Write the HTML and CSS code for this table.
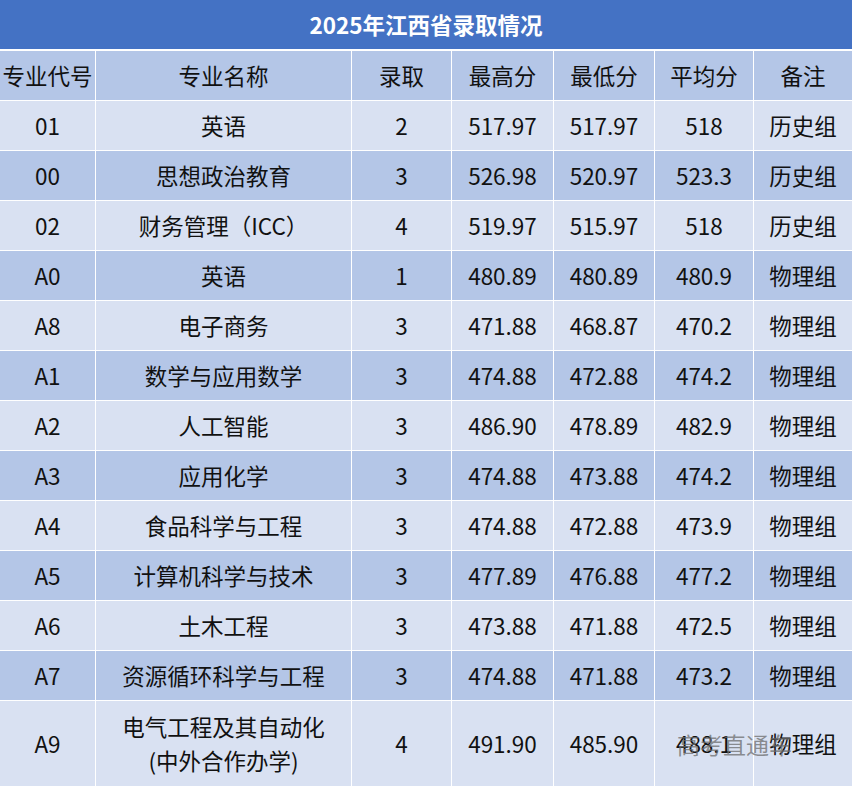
FILE: index.html
```html
<!DOCTYPE html>
<html lang="zh-CN">
<head>
<meta charset="utf-8">
<title>2025年江西省录取情况</title>
<link rel="stylesheet" href="styles.css">
</head>
<body>
<div class="wrap">
<table class="admit">
  <colgroup>
    <col class="c1"><col class="c2"><col class="c3"><col class="c4"><col class="c5"><col class="c6"><col class="c7">
  </colgroup>
  <thead>
    <tr class="title"><th colspan="7">2025年江西省录取情况</th></tr>
    <tr class="head">
      <th>专业代号</th><th>专业名称</th><th>录取</th><th>最高分</th><th>最低分</th><th>平均分</th><th>备注</th>
    </tr>
  </thead>
  <tbody>
    <tr class="lt"><td>01</td><td>英语</td><td>2</td><td>517.97</td><td>517.97</td><td>518</td><td>历史组</td></tr>
    <tr class="dk"><td>00</td><td>思想政治教育</td><td>3</td><td>526.98</td><td>520.97</td><td>523.3</td><td>历史组</td></tr>
    <tr class="lt"><td>02</td><td>财务管理（ICC）</td><td>4</td><td>519.97</td><td>515.97</td><td>518</td><td>历史组</td></tr>
    <tr class="dk"><td>A0</td><td>英语</td><td>1</td><td>480.89</td><td>480.89</td><td>480.9</td><td>物理组</td></tr>
    <tr class="lt"><td>A8</td><td>电子商务</td><td>3</td><td>471.88</td><td>468.87</td><td>470.2</td><td>物理组</td></tr>
    <tr class="dk"><td>A1</td><td>数学与应用数学</td><td>3</td><td>474.88</td><td>472.88</td><td>474.2</td><td>物理组</td></tr>
    <tr class="lt"><td>A2</td><td>人工智能</td><td>3</td><td>486.90</td><td>478.89</td><td>482.9</td><td>物理组</td></tr>
    <tr class="dk"><td>A3</td><td>应用化学</td><td>3</td><td>474.88</td><td>473.88</td><td>474.2</td><td>物理组</td></tr>
    <tr class="lt"><td>A4</td><td>食品科学与工程</td><td>3</td><td>474.88</td><td>472.88</td><td>473.9</td><td>物理组</td></tr>
    <tr class="dk"><td>A5</td><td>计算机科学与技术</td><td>3</td><td>477.89</td><td>476.88</td><td>477.2</td><td>物理组</td></tr>
    <tr class="lt"><td>A6</td><td>土木工程</td><td>3</td><td>473.88</td><td>471.88</td><td>472.5</td><td>物理组</td></tr>
    <tr class="dk"><td>A7</td><td>资源循环科学与工程</td><td>3</td><td>474.88</td><td>471.88</td><td>473.2</td><td>物理组</td></tr>
    <tr class="lt tall"><td>A9</td><td>电气工程及其自动化<br>(中外合作办学)</td><td>4</td><td>491.90</td><td>485.90</td><td>488.1</td><td>物理组</td></tr>
  </tbody>
</table>
<div class="watermark">高考直通车</div>
</div>
</body>
</html>
```

FILE: styles.css
```css
html, body {
  margin: 0;
  padding: 0;
  background: #ffffff;
}

.wrap {
  position: relative;
  width: 853px;
  height: 787px;
  overflow: hidden;
}

.admit {
  width: 853px;
  table-layout: fixed;
  border-collapse: separate;
  border-spacing: 0;
  font-family: "Noto Sans CJK SC", "Noto Sans", sans-serif;
  font-size: 22.5px;
  color: #111111;
}

.c1 { width: 96px; }
.c2 { width: 256px; }
.c3 { width: 100px; }
.c4 { width: 102px; }
.c5 { width: 101px; }
.c6 { width: 99px; }
.c7 { width: 99px; }

.admit th,
.admit td {
  padding: 0;
  text-align: center;
  vertical-align: middle;
  font-weight: normal;
  border-right: 1px solid #ffffff;
  border-bottom: 1px solid #ffffff;
  height: 49px;
  line-height: 1.2;
  white-space: nowrap;
}

.title th {
  background: #4472c4;
  color: #ffffff;
  font-weight: bold;
  font-size: 22.5px;
  height: 49px;
  border-bottom: 2px solid #ffffff;
}

.head th {
  background: #b4c6e7;
  height: 49px;
}

.lt td { background: #d9e1f2; }
.dk td { background: #b4c6e7; }

.tall td {
  height: 85px;
  border-bottom: 0;
  line-height: 1.5;
}

.watermark {
  position: absolute;
  left: 677px;
  top: 727px;
  font-family: "Noto Sans CJK SC", sans-serif;
  font-size: 23px;
  color: rgba(110, 110, 110, 0.75);
  pointer-events: none;
}
```
